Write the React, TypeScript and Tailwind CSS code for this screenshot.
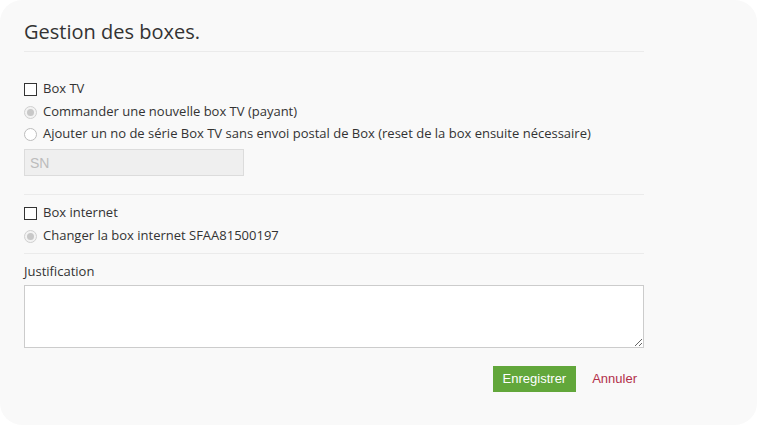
import React from "react";

// small custom controls, the native ones don't look like the old browser ones
function Check({ label }: { label: string }) {
  return (
    <label className="flex h-[22px] items-center">
      <span className="h-[13px] w-[13px] shrink-0 border border-[#333] bg-white" />
      <span className="ml-[6px]">{label}</span>
    </label>
  );
}

function Radio({ label, checked }: { label: string; checked?: boolean }) {
  return (
    <label className="flex h-[22px] items-center">
      <span
        className={`flex h-[13px] w-[13px] shrink-0 items-center justify-center rounded-full border ${
          checked ? "border-[#d0d0d0] bg-[#f3f3f3]" : "border-[#bdbdbd] bg-white"
        }`}
      >
        {checked && <span className="h-[7px] w-[7px] rounded-full bg-[#c8c8c8]" />}
      </span>
      <span className="ml-[6px]">{label}</span>
    </label>
  );
}

export default function App() {
  return (
    <div className="h-[425px] w-[757px] bg-white">
      <div className="h-full w-full rounded-[22px] bg-[#f9f9f9] pl-6 font-['Open_Sans',sans-serif] text-[13px] text-[#333]">
        <div className="w-[620px]">
          <h1 className="border-b border-[#ebebeb] pb-[5px] pt-[18px] text-[20px] leading-[28px] font-normal">
            Gestion des boxes.
          </h1>

          <div className="mt-[26px]">
            <Check label="Box TV" />
            <div className="mt-px">
              <Radio label="Commander une nouvelle box TV (payant)" checked />
            </div>
            <Radio label="Ajouter un no de série Box TV sans envoi postal de Box (reset de la box ensuite nécessaire)" />
            <input
              disabled
              placeholder="SN"
              className="mt-1 h-[27px] w-[220px] border border-[#dcdcdc] bg-[#efefef] px-[5px] font-['Liberation_Sans',Arial,sans-serif] text-[14px] placeholder:text-[#bcbcbc]"
            />
          </div>

          <div className="mt-[18px] border-t border-[#ebebeb] pt-[7px]">
            <Check label="Box internet" />
            <div className="mt-px">
              <Radio label="Changer la box internet SFAA81500197" checked />
            </div>
          </div>

          <div className="mt-[6px] border-t border-[#ebebeb] pt-[6px]">
            <div className="leading-[22px]">Justification</div>
            <textarea className="mt-[3px] block h-[63px] w-[620px] border border-[#cccccc] bg-white" />
          </div>

          <div className="mt-[18px] flex items-center justify-end gap-2 font-['Liberation_Sans',Arial,sans-serif] text-[13px]">
            <button className="h-[26px] bg-[#62a73b] px-[10px] text-white">Enregistrer</button>
            <a className="pl-2 pr-[7px] text-[#b2304a]">Annuler</a>
          </div>
        </div>
      </div>
    </div>
  );
}
